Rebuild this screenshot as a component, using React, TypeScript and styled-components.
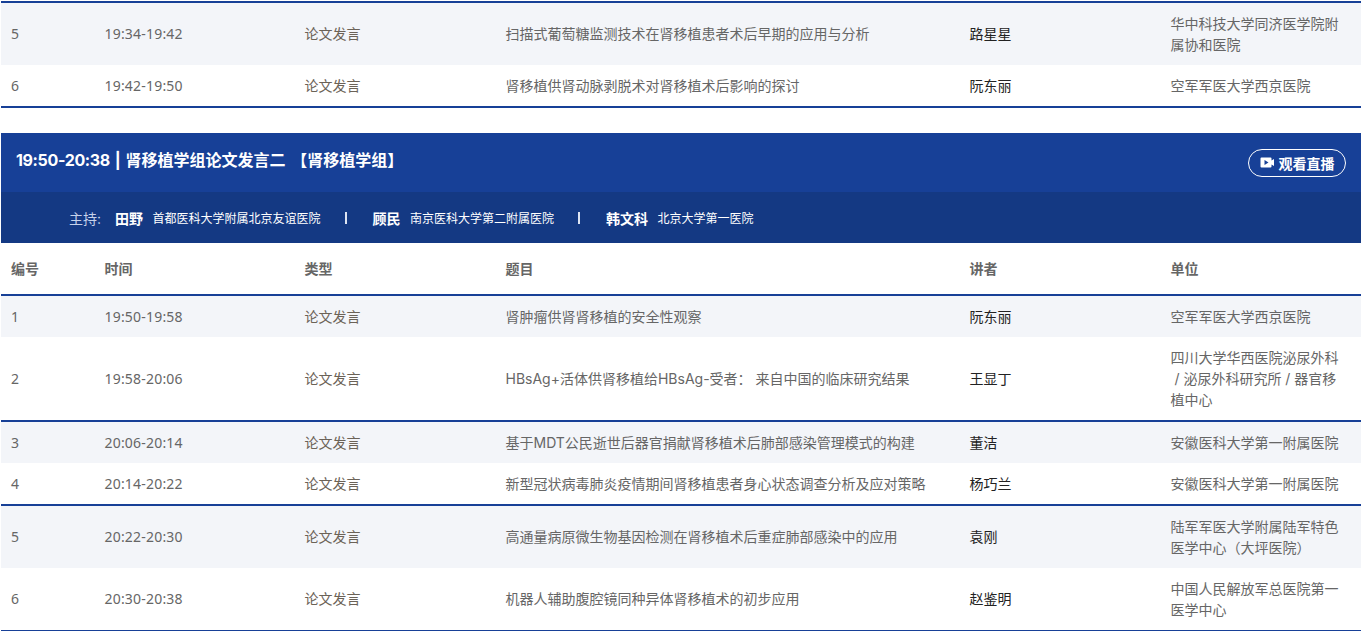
import React, { FC } from 'react';
import styled, { createGlobalStyle } from 'styled-components';

const GlobalStyle = createGlobalStyle`
  html, body {
    margin: 0;
    padding: 0;
    background: #fff;
  }
  body {
    font-family: Inter, "Noto Sans CJK SC", sans-serif;
    font-size: 14px;
    color: #666;
    overflow: hidden;
  }
`;

const Page = styled.div`
  width: 1360px;
  margin-left: 1px;
  height: 631px;
  overflow: hidden;
`;

const Rows = styled.div<{ $top?: boolean }>`
  border-top: ${(p) => (p.$top ? '2px solid #174097' : 'none')};
  margin-top: ${(p) => (p.$top ? '1px' : '0')};
`;

const Row = styled.div<{ $shade?: boolean; $line?: boolean; $h: number; $lift?: boolean }>`
  display: grid;
  grid-template-columns: 93.5px 200px 201px 464px 201px 200.5px;
  align-items: center;
  height: ${(p) => p.$h}px;
  box-sizing: border-box;
  padding-bottom: ${(p) => (p.$lift ? '2px' : '0')};
  background: ${(p) => (p.$shade ? '#f3f5f9' : '#fff')};
  border-bottom: ${(p) => (p.$line ? '2px solid #174097' : 'none')};
`;

const Cell = styled.div`
  padding-left: 10px;
  line-height: 21px;
  color: #666;
`;

const NumCell = styled(Cell)`
  font-family: "Noto Sans", "Noto Sans CJK SC", sans-serif;
  letter-spacing: 0.2px;
`;

const Type = styled(Cell)`
  color: #6b6257;
`;

const Speaker = styled(Cell)`
  color: #222;
`;

const Org = styled(Cell)<{ $lift?: boolean }>`
  padding-right: 22px;
  margin-top: ${(p) => (p.$lift ? '2px' : '0')};
`;

const HeadCell = styled(Cell)`
  font-weight: 700;
  color: #666;
`;

const Session = styled.section`
  margin-top: 25px;
`;

const TitleBar = styled.div`
  height: 59px;
  box-sizing: border-box;
  padding: 0 15px 2px;
  background: #174097;
  display: flex;
  align-items: center;
  justify-content: space-between;
  color: #fff;
`;

const Title = styled.h2`
  margin: 0 0 5px;
  font-size: 16px;
  font-weight: 700;
  word-spacing: 1px;
  color: #fff;
`;

const TitleTime = styled.span`
  letter-spacing: -0.35px;
`;

const TitleTag = styled.span`
  margin-left: 1px;
`;

const WatchBtn = styled.a`
  display: flex;
  align-items: center;
  justify-content: center;
  gap: 4px;
  box-sizing: border-box;
  width: 98px;
  height: 28px;
  margin-top: 2px;
  border: 1px solid #fff;
  border-radius: 15px;
  color: #fff;
  font-size: 14px;
  font-weight: 700;
`;

const Hosts = styled.div`
  height: 51px;
  background: #143983;
  display: flex;
  align-items: center;
  padding-left: 68px;
  color: #fff;
`;

const HostLabel = styled.span`
  font-size: 14px;
  color: #c6d2ea;
  margin-right: 14px;
`;

const HostName = styled.span`
  font-size: 14px;
  font-weight: 700;
  margin-right: 9.5px;
`;

const HostOrg = styled.span`
  font-size: 12px;
`;

const Divider = styled.span`
  width: 2px;
  height: 12px;
  background: #dde4f2;
  margin: 0 26px 0 24px;
`;

const VideoIcon: FC = () => (
  <svg width="15" height="11" viewBox="0 0 15 11">
    <path
      fill="#fff"
      fillRule="evenodd"
      d="M1.5 0.5h9a1 1 0 0 1 1 1v2l2.5-1.5v7l-2.5-1.5v2a1 1 0 0 1-1 1h-9a1 1 0 0 1-1-1v-8a1 1 0 0 1 1-1zM4.5 3v5l4-2.5z"
    />
  </svg>
);

interface Talk {
  no: number;
  time: string;
  title: string;
  speaker: string;
  org: string;
  h: number;
  shade?: boolean;
  line?: boolean;
  lift?: boolean;
}

const TalkRow: FC<{ talk: Talk }> = ({ talk }) => (
  <Row $h={talk.h} $shade={talk.shade} $line={talk.line} $lift={talk.lift}>
    <NumCell>{talk.no}</NumCell>
    <NumCell>{talk.time}</NumCell>
    <Type>论文发言</Type>
    <Cell>{talk.title}</Cell>
    <Speaker>{talk.speaker}</Speaker>
    <Org $lift={talk.lift}>{talk.org}</Org>
  </Row>
);

const firstTalks: Talk[] = [
  { no: 5, time: '19:34-19:42', title: '扫描式葡萄糖监测技术在肾移植患者术后早期的应用与分析', speaker: '路星星', org: '华中科技大学同济医学院附属协和医院', h: 62, shade: true, lift: true },
  { no: 6, time: '19:42-19:50', title: '肾移植供肾动脉剥脱术对肾移植术后影响的探讨', speaker: '阮东丽', org: '空军军医大学西京医院', h: 43, line: true },
];

const secondTalks: Talk[] = [
  { no: 1, time: '19:50-19:58', title: '肾肿瘤供肾肾移植的安全性观察', speaker: '阮东丽', org: '空军军医大学西京医院', h: 41, shade: true },
  { no: 2, time: '19:58-20:06', title: 'HBsAg+活体供肾移植给HBsAg-受者： 来自中国的临床研究结果', speaker: '王显丁', org: '四川大学华西医院泌尿外科 \u00a0/ 泌尿外科研究所 / 器官移植中心', h: 85, line: true },
  { no: 3, time: '20:06-20:14', title: '基于MDT公民逝世后器官捐献肾移植术后肺部感染管理模式的构建', speaker: '董洁', org: '安徽医科大学第一附属医院', h: 41, shade: true },
  { no: 4, time: '20:14-20:22', title: '新型冠状病毒肺炎疫情期间肾移植患者身心状态调查分析及应对策略', speaker: '杨巧兰', org: '安徽医科大学第一附属医院', h: 43, line: true },
  { no: 5, time: '20:22-20:30', title: '高通量病原微生物基因检测在肾移植术后重症肺部感染中的应用', speaker: '袁刚', org: '陆军军医大学附属陆军特色医学中心（大坪医院）', h: 62, shade: true, lift: true },
  { no: 6, time: '20:30-20:38', title: '机器人辅助腹腔镜同种异体肾移植术的初步应用', speaker: '赵鉴明', org: '中国人民解放军总医院第一医学中心', h: 64, line: true, lift: true },
];

const App: FC = () => (
  <Page>
    <GlobalStyle />
    <Rows $top>
      {firstTalks.map((t) => (
        <TalkRow key={t.no} talk={t} />
      ))}
    </Rows>

    <Session>
      <TitleBar>
        <Title>
          <TitleTime>19:50-20:38</TitleTime> | 肾移植学组论文发言二 <TitleTag>【肾移植学组】</TitleTag>
        </Title>
        <WatchBtn>
          <VideoIcon />
          观看直播
        </WatchBtn>
      </TitleBar>
      <Hosts>
        <HostLabel>主持:</HostLabel>
        <HostName>田野</HostName>
        <HostOrg>首都医科大学附属北京友谊医院</HostOrg>
        <Divider />
        <HostName>顾民</HostName>
        <HostOrg>南京医科大学第二附属医院</HostOrg>
        <Divider />
        <HostName>韩文科</HostName>
        <HostOrg>北京大学第一医院</HostOrg>
      </Hosts>
      <Row $h={53} $line>
        <HeadCell>编号</HeadCell>
        <HeadCell>时间</HeadCell>
        <HeadCell>类型</HeadCell>
        <HeadCell>题目</HeadCell>
        <HeadCell>讲者</HeadCell>
        <HeadCell>单位</HeadCell>
      </Row>
      {secondTalks.map((t) => (
        <TalkRow key={t.no} talk={t} />
      ))}
    </Session>
  </Page>
);

export default App;
